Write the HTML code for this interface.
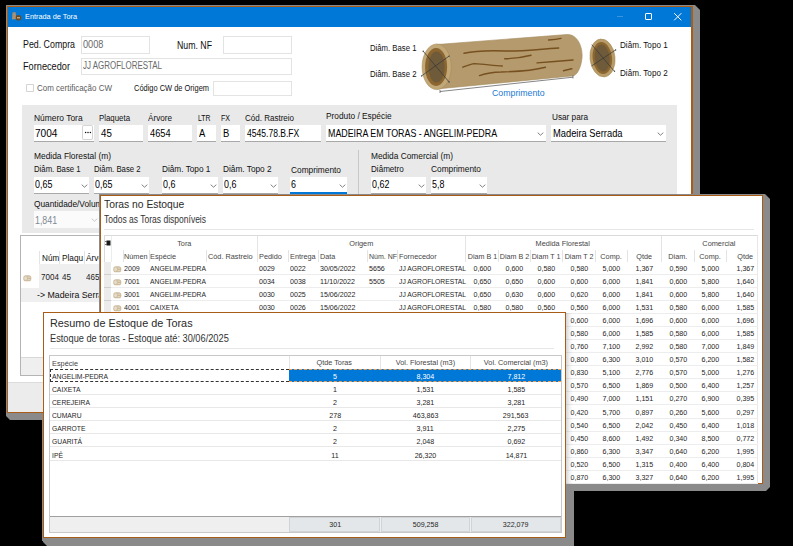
<!DOCTYPE html><html><head><meta charset="utf-8"><style>
html,body{margin:0;padding:0}
body{width:793px;height:546px;background:#000;position:relative;overflow:hidden;font-family:"Liberation Sans",sans-serif}
.a{position:absolute}
.t{position:absolute;white-space:nowrap}
</style></head><body>
<div class="a" style="left:6px;top:5px;width:694px;height:415px;background:#8a8a8a;clip-path:polygon(0 0,calc(100% - 5px) 0,100% 5px,100% calc(100% - 4px),calc(100% - 4px) 100%,4px 100%,0 calc(100% - 4px))"></div>
<div class="a" style="left:7px;top:6px;width:686px;height:407px;background:#fff;box-shadow:inset 0 0 0 1px #a95c15,inset -2px 0 0 #a95c15;"></div>
<div class="a" style="left:8px;top:7px;width:683px;height:20px;background:#0078d7;"></div>
<svg class="a" style="left:11px;top:11px" width="11" height="10" viewBox="0 0 11 10"><path d="M1.5 1.5 L4.5 1 L5.5 8 L1 8.5 Z" fill="#a89070"/><circle cx="7.5" cy="6.8" r="2.8" fill="#6b4a22"/><rect x="6" y="6.3" width="3" height="1" fill="#e0d0b0"/></svg>
<span class="t" style="left:25.00px;top:13.20px;font-size:8.00px;line-height:8.00px;color:#fff;transform:scaleX(0.916);transform-origin:left top;">Entrada de Tora</span>
<div class="a" style="left:617px;top:16px;width:6px;height:1px;background:#3d93dc;"></div>
<div class="a" style="left:645px;top:13px;width:5px;height:5px;border:1px solid #fff;border-radius:1px"></div>
<svg class="a" style="left:673px;top:12px" width="10" height="10" viewBox="0 0 10 10"><path d="M1.2 1.2 L8.3 8.3 M8.3 1.2 L1.2 8.3" stroke="#fff" stroke-width="1"/></svg>
<span class="t" style="left:23.00px;top:40.30px;font-size:10.00px;line-height:10.00px;color:#101010;transform:scaleX(0.883);transform-origin:left top;">Ped. Compra</span>
<div class="a" style="left:81px;top:36px;width:69px;height:18px;background:#fff;box-shadow:inset 0 0 0 1px #e3e3e3;"></div>
<span class="t" style="left:83.00px;top:40.00px;font-size:10.00px;line-height:10.00px;color:#6a6a6a;transform:scaleX(0.921);transform-origin:left top;">0008</span>
<span class="t" style="left:177.00px;top:40.50px;font-size:10.00px;line-height:10.00px;color:#101010;transform:scaleX(0.875);transform-origin:left top;">Num. NF</span>
<div class="a" style="left:223px;top:36px;width:69px;height:18px;background:#fff;box-shadow:inset 0 0 0 1px #e3e3e3;"></div>
<span class="t" style="left:23.00px;top:61.50px;font-size:10.00px;line-height:10.00px;color:#101010;transform:scaleX(0.919);transform-origin:left top;">Fornecedor</span>
<div class="a" style="left:81px;top:58px;width:211px;height:17px;background:#fff;box-shadow:inset 0 0 0 1px #e3e3e3;"></div>
<span class="t" style="left:83.00px;top:61.30px;font-size:10.00px;line-height:10.00px;color:#6a6a6a;transform:scaleX(0.796);transform-origin:left top;">JJ AGROFLORESTAL</span>
<div class="a" style="left:26px;top:84px;width:8px;height:8px;background:#fff;box-shadow:inset 0 0 0 1px #d4d4d4;border-radius:1px;"></div>
<span class="t" style="left:37.00px;top:84.38px;font-size:8.50px;line-height:8.50px;color:#5c5c5c;transform:scaleX(0.940);transform-origin:left top;">Com certificação CW</span>
<span class="t" style="left:134.00px;top:83.58px;font-size:8.50px;line-height:8.50px;color:#101010;transform:scaleX(0.877);transform-origin:left top;">Código CW de Origem</span>
<div class="a" style="left:213px;top:81px;width:79px;height:15px;background:#fff;box-shadow:inset 0 0 0 1px #e3e3e3;"></div>
<span class="t" style="left:370.00px;top:43.98px;font-size:8.50px;line-height:8.50px;color:#101010;transform:scaleX(0.911);transform-origin:left top;">Diâm. Base 1</span>
<span class="t" style="left:370.00px;top:69.68px;font-size:8.50px;line-height:8.50px;color:#101010;transform:scaleX(0.911);transform-origin:left top;">Diâm. Base 2</span>
<span class="t" style="left:620.00px;top:41.48px;font-size:8.50px;line-height:8.50px;color:#101010;transform:scaleX(0.955);transform-origin:left top;">Diâm. Topo 1</span>
<span class="t" style="left:620.00px;top:68.58px;font-size:8.50px;line-height:8.50px;color:#101010;transform:scaleX(0.955);transform-origin:left top;">Diâm. Topo 2</span>
<span class="t" style="left:492.00px;top:88.95px;font-size:9.00px;line-height:9.00px;color:#1a7ad4;transform:scaleX(0.974);transform-origin:left top;">Comprimento</span>
<svg class="a" style="left:0;top:0" width="793" height="120" viewBox="0 0 793 120">
<path d="M437 44.5 L567 34.5 C578 34 583 48 582 58 C581 68 577 76 572 76 L437 89 Z" fill="#b49a6c" stroke="#a58b5e" stroke-width="0.6"/>
<ellipse cx="436.7" cy="66.8" rx="14.6" ry="22.8" fill="#c2a877" stroke="#a88d5d" stroke-width="0.6"/>
<ellipse cx="436.1" cy="66.9" rx="11" ry="19" fill="#8b6630"/>
<ellipse cx="436.5" cy="67" rx="8.1" ry="15.4" fill="#6f5a3a"/>
<path d="M423.2 51.2 L449.1 82 M421.6 75.9 L449.1 56.1" stroke="#3a3a3a" stroke-width="0.75"/><circle cx="423.2" cy="51.2" r="0.7" fill="#444"/><circle cx="421.6" cy="75.9" r="0.7" fill="#444"/><circle cx="449.1" cy="82" r="0.7" fill="#444"/><circle cx="449.1" cy="56.1" r="0.7" fill="#444"/>
<path d="M464 53.3 C478 50 492 50.5 506 51 C522 51.5 540 49 558.7 48" fill="none" stroke="#775020" stroke-width="1.4" stroke-linecap="round"/>
<path d="M504.7 58.8 C515 58.5 524 57 531 55.2" fill="none" stroke="#775020" stroke-width="1.4" stroke-linecap="round"/>
<path d="M537 62.9 C550 62 562 61 573 60" fill="none" stroke="#775020" stroke-width="1.4" stroke-linecap="round"/>
<path d="M462.8 67.2 C467 65.5 471 63.8 474.7 63.6 C485 64 494 66 502.3 66" fill="none" stroke="#775020" stroke-width="1.4" stroke-linecap="round"/>
<path d="M479.5 75.6 C487 73 494 72 501 72 C520 71.5 535 70 545.5 67.2" fill="none" stroke="#775020" stroke-width="1.4" stroke-linecap="round"/>
<path d="M548.6 40 C553 39.8 558 39.2 561 38.4" fill="none" stroke="#775020" stroke-width="1.4" stroke-linecap="round"/>
<path d="M563.5 70.8 C567 70 570 69.3 571.9 68.8" fill="none" stroke="#775020" stroke-width="1.4" stroke-linecap="round"/>
<path d="M440 91.5 L573 77.2" stroke="#505050" stroke-width="0.7"/>
<path d="M440 90 L440 93 M573 75.5 L573 78.5" stroke="#505050" stroke-width="0.7"/>
<g transform="rotate(-6 602.5 58)"><ellipse cx="602.5" cy="58" rx="12.5" ry="19" fill="#b89c68" stroke="#a88d5d" stroke-width="0.6"/>
<ellipse cx="602.3" cy="58" rx="9.7" ry="16" fill="#8b6630"/>
<ellipse cx="602.3" cy="58" rx="7.4" ry="13.5" fill="#6f5a3a"/></g>
<path d="M591.8 44.6 L614 70.9 M591.8 65.8 L615.4 50.1" stroke="#3a3a3a" stroke-width="0.75"/><circle cx="614.5" cy="71.3" r="0.7" fill="#444"/><circle cx="615.6" cy="50" r="0.7" fill="#444"/>

</svg>
<div class="a" style="left:22px;top:105px;width:655px;height:128px;background:#e9e9e9;"></div>
<span class="t" style="left:33.50px;top:113.58px;font-size:8.50px;line-height:8.50px;color:#101010;transform:scaleX(0.992);transform-origin:left top;">Número Tora</span>
<span class="t" style="left:98.70px;top:113.58px;font-size:8.50px;line-height:8.50px;color:#101010;transform:scaleX(0.924);transform-origin:left top;">Plaqueta</span>
<span class="t" style="left:148.00px;top:113.58px;font-size:8.50px;line-height:8.50px;color:#101010;transform:scaleX(0.959);transform-origin:left top;">Árvore</span>
<span class="t" style="left:197.50px;top:113.58px;font-size:8.50px;line-height:8.50px;color:#101010;transform:scaleX(0.804);transform-origin:left top;">LTR</span>
<span class="t" style="left:221.20px;top:113.58px;font-size:8.50px;line-height:8.50px;color:#101010;transform:scaleX(0.829);transform-origin:left top;">FX</span>
<span class="t" style="left:245.20px;top:113.58px;font-size:8.50px;line-height:8.50px;color:#101010;transform:scaleX(0.943);transform-origin:left top;">Cód. Rastreio</span>
<span class="t" style="left:325.50px;top:111.68px;font-size:8.50px;line-height:8.50px;color:#101010;transform:scaleX(0.978);transform-origin:left top;">Produto / Espécie</span>
<span class="t" style="left:552.00px;top:113.48px;font-size:8.50px;line-height:8.50px;color:#101010;transform:scaleX(0.965);transform-origin:left top;">Usar para</span>
<div class="a" style="left:34px;top:125px;width:60px;height:17px;background:#fff;"></div>
<div class="a" style="left:34px;top:141px;width:60px;height:1px;background:#a8a8a8;"></div>
<div class="a" style="left:82px;top:125px;width:11px;height:15px;background:#fff;box-shadow:inset 0 0 0 1px #d4d4d4;border-radius:2px;"></div>
<svg class="a" style="left:82px;top:125px" width="11" height="15" viewBox="0 0 11 15"><circle cx="3.6" cy="7.4" r="0.75" fill="#111"/><circle cx="6" cy="7.4" r="0.75" fill="#111"/><circle cx="8.4" cy="7.4" r="0.75" fill="#111"/></svg>
<span class="t" style="left:35.30px;top:127.77px;font-size:10.50px;line-height:10.50px;color:#000;transform:scaleX(0.963);transform-origin:left top;">7004</span>
<div class="a" style="left:99px;top:125px;width:44px;height:17px;background:#fff;"></div>
<div class="a" style="left:99px;top:141px;width:44px;height:1px;background:#a8a8a8;"></div>
<span class="t" style="left:100.50px;top:127.77px;font-size:10.50px;line-height:10.50px;color:#000;transform:scaleX(0.925);transform-origin:left top;">45</span>
<div class="a" style="left:148px;top:125px;width:44px;height:17px;background:#fff;"></div>
<div class="a" style="left:148px;top:141px;width:44px;height:1px;background:#a8a8a8;"></div>
<span class="t" style="left:149.50px;top:127.77px;font-size:10.50px;line-height:10.50px;color:#000;transform:scaleX(0.878);transform-origin:left top;">4654</span>
<div class="a" style="left:197px;top:125px;width:19px;height:17px;background:#fff;"></div>
<div class="a" style="left:197px;top:141px;width:19px;height:1px;background:#a8a8a8;"></div>
<span class="t" style="left:199.00px;top:127.77px;font-size:10.50px;line-height:10.50px;color:#000;transform:scaleX(0.900);transform-origin:left top;">A</span>
<div class="a" style="left:221px;top:125px;width:19px;height:17px;background:#fff;"></div>
<div class="a" style="left:221px;top:141px;width:19px;height:1px;background:#a8a8a8;"></div>
<span class="t" style="left:223.00px;top:127.77px;font-size:10.50px;line-height:10.50px;color:#000;transform:scaleX(0.900);transform-origin:left top;">B</span>
<div class="a" style="left:245px;top:125px;width:76px;height:17px;background:#fff;"></div>
<div class="a" style="left:245px;top:141px;width:76px;height:1px;background:#a8a8a8;"></div>
<span class="t" style="left:247.00px;top:127.77px;font-size:10.50px;line-height:10.50px;color:#000;transform:scaleX(0.814);transform-origin:left top;">4545.78.B.FX</span>
<div class="a" style="left:326px;top:125px;width:220px;height:17px;background:#fff;"></div>
<div class="a" style="left:326px;top:141px;width:220px;height:1px;background:#a8a8a8;"></div>
<span class="t" style="left:327.50px;top:127.58px;font-size:10.50px;line-height:10.50px;color:#000;transform:scaleX(0.844);transform-origin:left top;">MADEIRA EM TORAS - ANGELIM-PEDRA</span>
<svg class="a" style="left:537.0px;top:131.5px" width="7" height="4" viewBox="0 0 7 4"><path d="M0.7 0.7 L3.5 3.2 L6.3 0.7" fill="none" stroke="#6a6a6a" stroke-width="0.85"/></svg>
<div class="a" style="left:551px;top:125px;width:115px;height:17px;background:#fff;"></div>
<div class="a" style="left:551px;top:141px;width:115px;height:1px;background:#a8a8a8;"></div>
<span class="t" style="left:552.50px;top:127.58px;font-size:10.50px;line-height:10.50px;color:#000;transform:scaleX(0.889);transform-origin:left top;">Madeira Serrada</span>
<svg class="a" style="left:657.0px;top:131.5px" width="7" height="4" viewBox="0 0 7 4"><path d="M0.7 0.7 L3.5 3.2 L6.3 0.7" fill="none" stroke="#6a6a6a" stroke-width="0.85"/></svg>
<span class="t" style="left:33.90px;top:151.68px;font-size:8.50px;line-height:8.50px;color:#101010;transform:scaleX(0.988);transform-origin:left top;">Medida Florestal (m)</span>
<span class="t" style="left:33.50px;top:164.78px;font-size:8.50px;line-height:8.50px;color:#101010;transform:scaleX(0.913);transform-origin:left top;">Diâm. Base 1</span>
<span class="t" style="left:93.90px;top:164.78px;font-size:8.50px;line-height:8.50px;color:#101010;transform:scaleX(0.913);transform-origin:left top;">Diâm. Base 2</span>
<span class="t" style="left:162.00px;top:164.78px;font-size:8.50px;line-height:8.50px;color:#101010;transform:scaleX(0.969);transform-origin:left top;">Diâm. Topo 1</span>
<span class="t" style="left:222.80px;top:164.78px;font-size:8.50px;line-height:8.50px;color:#101010;transform:scaleX(0.973);transform-origin:left top;">Diâm. Topo 2</span>
<span class="t" style="left:290.50px;top:165.58px;font-size:8.50px;line-height:8.50px;color:#101010;transform:scaleX(0.980);transform-origin:left top;">Comprimento</span>
<span class="t" style="left:371.00px;top:151.78px;font-size:8.50px;line-height:8.50px;color:#101010;transform:scaleX(0.981);transform-origin:left top;">Medida Comercial (m)</span>
<span class="t" style="left:371.00px;top:164.78px;font-size:8.50px;line-height:8.50px;color:#101010;transform:scaleX(0.951);transform-origin:left top;">Diâmetro</span>
<span class="t" style="left:431.30px;top:164.78px;font-size:8.50px;line-height:8.50px;color:#101010;transform:scaleX(0.980);transform-origin:left top;">Comprimento</span>
<div class="a" style="left:358px;top:150px;width:1px;height:46px;background:#c8c8c8;"></div>
<div class="a" style="left:34px;top:177px;width:55px;height:17px;background:#fff;"></div>
<div class="a" style="left:34px;top:193px;width:55px;height:1px;background:#a8a8a8;"></div>
<span class="t" style="left:35.20px;top:179.07px;font-size:10.50px;line-height:10.50px;color:#000;transform:scaleX(0.850);transform-origin:left top;">0,65</span>
<svg class="a" style="left:80.5px;top:183.5px" width="7" height="4" viewBox="0 0 7 4"><path d="M0.7 0.7 L3.5 3.2 L6.3 0.7" fill="none" stroke="#6a6a6a" stroke-width="0.85"/></svg>
<div class="a" style="left:94px;top:177px;width:55px;height:17px;background:#fff;"></div>
<div class="a" style="left:94px;top:193px;width:55px;height:1px;background:#a8a8a8;"></div>
<span class="t" style="left:95.20px;top:179.07px;font-size:10.50px;line-height:10.50px;color:#000;transform:scaleX(0.850);transform-origin:left top;">0,65</span>
<svg class="a" style="left:140.5px;top:183.5px" width="7" height="4" viewBox="0 0 7 4"><path d="M0.7 0.7 L3.5 3.2 L6.3 0.7" fill="none" stroke="#6a6a6a" stroke-width="0.85"/></svg>
<div class="a" style="left:162px;top:177px;width:56px;height:17px;background:#fff;"></div>
<div class="a" style="left:162px;top:193px;width:56px;height:1px;background:#a8a8a8;"></div>
<span class="t" style="left:163.20px;top:179.07px;font-size:10.50px;line-height:10.50px;color:#000;transform:scaleX(0.850);transform-origin:left top;">0,6</span>
<svg class="a" style="left:209.5px;top:183.5px" width="7" height="4" viewBox="0 0 7 4"><path d="M0.7 0.7 L3.5 3.2 L6.3 0.7" fill="none" stroke="#6a6a6a" stroke-width="0.85"/></svg>
<div class="a" style="left:223px;top:177px;width:55px;height:17px;background:#fff;"></div>
<div class="a" style="left:223px;top:193px;width:55px;height:1px;background:#a8a8a8;"></div>
<span class="t" style="left:224.20px;top:179.07px;font-size:10.50px;line-height:10.50px;color:#000;transform:scaleX(0.850);transform-origin:left top;">0,6</span>
<svg class="a" style="left:269.5px;top:183.5px" width="7" height="4" viewBox="0 0 7 4"><path d="M0.7 0.7 L3.5 3.2 L6.3 0.7" fill="none" stroke="#6a6a6a" stroke-width="0.85"/></svg>
<div class="a" style="left:290px;top:177px;width:57px;height:17px;background:#fff;"></div>
<div class="a" style="left:290px;top:192px;width:57px;height:2px;background:#0078d7;"></div>
<span class="t" style="left:291.20px;top:179.07px;font-size:10.50px;line-height:10.50px;color:#000;transform:scaleX(0.850);transform-origin:left top;">6</span>
<svg class="a" style="left:338.5px;top:183.5px" width="7" height="4" viewBox="0 0 7 4"><path d="M0.7 0.7 L3.5 3.2 L6.3 0.7" fill="none" stroke="#6a6a6a" stroke-width="0.85"/></svg>
<div class="a" style="left:371px;top:177px;width:55px;height:17px;background:#fff;"></div>
<div class="a" style="left:371px;top:193px;width:55px;height:1px;background:#a8a8a8;"></div>
<span class="t" style="left:372.20px;top:179.07px;font-size:10.50px;line-height:10.50px;color:#000;transform:scaleX(0.850);transform-origin:left top;">0,62</span>
<svg class="a" style="left:417.5px;top:183.5px" width="7" height="4" viewBox="0 0 7 4"><path d="M0.7 0.7 L3.5 3.2 L6.3 0.7" fill="none" stroke="#6a6a6a" stroke-width="0.85"/></svg>
<div class="a" style="left:431px;top:177px;width:56px;height:17px;background:#fff;"></div>
<div class="a" style="left:431px;top:193px;width:56px;height:1px;background:#a8a8a8;"></div>
<span class="t" style="left:432.20px;top:179.07px;font-size:10.50px;line-height:10.50px;color:#000;transform:scaleX(0.850);transform-origin:left top;">5,8</span>
<svg class="a" style="left:478.5px;top:183.5px" width="7" height="4" viewBox="0 0 7 4"><path d="M0.7 0.7 L3.5 3.2 L6.3 0.7" fill="none" stroke="#6a6a6a" stroke-width="0.85"/></svg>
<span class="t" style="left:33.60px;top:200.18px;font-size:8.50px;line-height:8.50px;color:#101010;transform:scaleX(0.979);transform-origin:left top;">Quantidade/Volume</span>
<div class="a" style="left:34px;top:211px;width:66px;height:17px;background:#fbfbfb;"></div>
<span class="t" style="left:35.30px;top:215.07px;font-size:10.50px;line-height:10.50px;color:#7d8894;transform:scaleX(0.840);transform-origin:left top;">1,841</span>
<svg class="a" style="left:90.5px;top:218px" width="7" height="4" viewBox="0 0 7 4"><path d="M0.7 0.7 L3.5 3.2 L6.3 0.7" fill="none" stroke="#c0c0c0" stroke-width="0.85"/></svg>
<div class="a" style="left:20px;top:235px;width:672px;height:141px;background:#fff;box-shadow:inset 0 0 0 1px #b4b4b4;"></div>
<div class="a" style="left:39px;top:251px;width:1px;height:13px;background:#e4e4e4;"></div>
<div class="a" style="left:59px;top:251px;width:1px;height:13px;background:#e4e4e4;"></div>
<div class="a" style="left:84px;top:251px;width:1px;height:13px;background:#e4e4e4;"></div>
<span class="t" style="left:41.80px;top:253.58px;font-size:8.50px;line-height:8.50px;color:#101010;transform:scaleX(0.960);transform-origin:left top;">Núm</span>
<span class="t" style="left:61.50px;top:253.58px;font-size:8.50px;line-height:8.50px;color:#101010;transform:scaleX(0.972);transform-origin:left top;">Plaqu</span>
<span class="t" style="left:86.10px;top:253.58px;font-size:8.50px;line-height:8.50px;color:#101010;transform:scaleX(0.975);transform-origin:left top;">Árvore</span>
<div class="a" style="left:39px;top:264px;width:653px;height:24px;background:#efefef;"></div>
<span class="t" style="left:41.20px;top:272.97px;font-size:8.50px;line-height:8.50px;color:#222;transform:scaleX(0.945);transform-origin:left top;">7004</span>
<span class="t" style="left:61.50px;top:272.97px;font-size:8.50px;line-height:8.50px;color:#222;transform:scaleX(0.945);transform-origin:left top;">45</span>
<span class="t" style="left:86.10px;top:272.97px;font-size:8.50px;line-height:8.50px;color:#222;transform:scaleX(0.945);transform-origin:left top;">4654</span>
<div class="a" style="left:21px;top:288px;width:671px;height:14px;background:#efefef;"></div>
<span class="t" style="left:37.00px;top:290.65px;font-size:9.00px;line-height:9.00px;color:#101010;transform:scaleX(0.977);transform-origin:left top;">-&gt; Madeira Serrada</span>
<div class="a" style="left:21px;top:358px;width:670px;height:17px;background:#efefef;"></div>
<div class="a" style="left:21px;top:357px;width:670px;height:1px;background:#d8d8d8;"></div>
<div class="a" style="left:8px;top:382px;width:683px;height:30px;background:#ececec;"></div>
<div class="a" style="left:8px;top:382px;width:683px;height:1px;background:#dcdcdc;"></div>
<svg class="a" style="left:23px;top:274px" width="9" height="8" viewBox="0 0 9 8"><rect x="0.3" y="1.3" width="8" height="6" rx="2.6" fill="#cdbb9c"/><ellipse cx="2.6" cy="4.3" rx="1.4" ry="2" fill="#e6dccb"/><rect x="4.6" y="2.6" width="2.6" height="1.1" fill="#e2d6c0"/><rect x="4.6" y="5" width="2.6" height="1.1" fill="#e2d6c0"/></svg>
<div class="a" style="left:99px;top:194px;width:671px;height:297px;background:#8a8a8a;clip-path:polygon(0 0,calc(100% - 5px) 0,100% 5px,100% calc(100% - 4px),calc(100% - 4px) 100%,4px 100%,0 calc(100% - 4px))"></div>
<div class="a" style="left:100px;top:195px;width:663px;height:289px;background:#fff;box-shadow:inset 0 0 0 1px #a95c15;"></div>
<span class="t" style="left:104.20px;top:199.27px;font-size:10.50px;line-height:10.50px;color:#2a2a2a;transform:scaleX(0.983);transform-origin:left top;">Toras no Estoque</span>
<span class="t" style="left:104.20px;top:214.90px;font-size:10.00px;line-height:10.00px;color:#333;transform:scaleX(0.851);transform-origin:left top;">Todos as Toras disponíveis</span>
<div class="a" style="left:104px;top:229px;width:650px;height:1px;background:#e6e6e6;"></div>
<div class="a" style="left:104px;top:235px;width:654px;height:248px;background:#fff;border:1px solid #dadada;border-right-color:#e8e8e8;border-bottom:none;box-sizing:border-box;"></div>
<div class="a" style="left:257px;top:236px;width:1px;height:26px;background:#e4e4e4;"></div>
<div class="a" style="left:465px;top:236px;width:1px;height:26px;background:#e4e4e4;"></div>
<div class="a" style="left:661px;top:236px;width:1px;height:26px;background:#e4e4e4;"></div>
<div class="a" style="left:123px;top:250px;width:1px;height:12px;background:#e4e4e4;"></div>
<div class="a" style="left:149px;top:250px;width:1px;height:12px;background:#e4e4e4;"></div>
<div class="a" style="left:206px;top:250px;width:1px;height:12px;background:#e4e4e4;"></div>
<div class="a" style="left:288px;top:250px;width:1px;height:12px;background:#e4e4e4;"></div>
<div class="a" style="left:318px;top:250px;width:1px;height:12px;background:#e4e4e4;"></div>
<div class="a" style="left:367px;top:250px;width:1px;height:12px;background:#e4e4e4;"></div>
<div class="a" style="left:397px;top:250px;width:1px;height:12px;background:#e4e4e4;"></div>
<div class="a" style="left:498px;top:250px;width:1px;height:12px;background:#e4e4e4;"></div>
<div class="a" style="left:530px;top:250px;width:1px;height:12px;background:#e4e4e4;"></div>
<div class="a" style="left:562px;top:250px;width:1px;height:12px;background:#e4e4e4;"></div>
<div class="a" style="left:595px;top:250px;width:1px;height:12px;background:#e4e4e4;"></div>
<div class="a" style="left:627px;top:250px;width:1px;height:12px;background:#e4e4e4;"></div>
<div class="a" style="left:694px;top:250px;width:1px;height:12px;background:#e4e4e4;"></div>
<div class="a" style="left:726px;top:250px;width:1px;height:12px;background:#e4e4e4;"></div>
<svg class="a" style="left:105px;top:240px" width="6" height="6" viewBox="0 0 6 6"><rect x="1.5" y="0.5" width="4" height="5" fill="#1a1a1a"/><rect x="0.3" y="1" width="1.2" height="1" fill="#333"/><rect x="0.3" y="4" width="1.2" height="1" fill="#333"/></svg>
<div class="a" style="left:111px;top:236px;width:1px;height:26px;background:#ececec;"></div>
<span class="t" style="left:176.70px;top:239.62px;font-size:7.50px;line-height:7.50px;color:#464646;transform:scaleX(0.968);transform-origin:center top;">Tora</span>
<span class="t" style="left:348.71px;top:239.62px;font-size:7.50px;line-height:7.50px;color:#464646;transform:scaleX(0.975);transform-origin:center top;">Origem</span>
<span class="t" style="left:535.28px;top:239.62px;font-size:7.50px;line-height:7.50px;color:#464646;transform:scaleX(0.978);transform-origin:center top;">Medida Florestal</span>
<span class="t" style="left:701.62px;top:239.62px;font-size:7.50px;line-height:7.50px;color:#464646;transform:scaleX(0.980);transform-origin:center top;">Comercial</span>
<span class="t" style="left:124.00px;top:252.62px;font-size:7.50px;line-height:7.50px;color:#464646;transform:scaleX(0.972);transform-origin:left top;">Númen</span>
<span class="t" style="left:150.00px;top:252.62px;font-size:7.50px;line-height:7.50px;color:#464646;transform:scaleX(0.977);transform-origin:left top;">Espécie</span>
<span class="t" style="left:207.50px;top:252.62px;font-size:7.50px;line-height:7.50px;color:#464646;transform:scaleX(0.974);transform-origin:left top;">Cód. Rastreio</span>
<span class="t" style="left:258.50px;top:252.62px;font-size:7.50px;line-height:7.50px;color:#464646;transform:scaleX(0.975);transform-origin:left top;">Pedido</span>
<span class="t" style="left:289.50px;top:252.62px;font-size:7.50px;line-height:7.50px;color:#464646;transform:scaleX(0.977);transform-origin:left top;">Entrega</span>
<span class="t" style="left:320.00px;top:252.62px;font-size:7.50px;line-height:7.50px;color:#464646;transform:scaleX(0.968);transform-origin:left top;">Data</span>
<span class="t" style="left:368.50px;top:252.62px;font-size:7.50px;line-height:7.50px;color:#464646;transform:scaleX(0.936);transform-origin:left top;">Núm. NF</span>
<span class="t" style="left:398.50px;top:252.62px;font-size:7.50px;line-height:7.50px;color:#464646;transform:scaleX(0.981);transform-origin:left top;">Fornecedor</span>
<span class="t" style="left:466.58px;top:252.62px;font-size:7.50px;line-height:7.50px;color:#464646;transform:scaleX(0.953);transform-origin:center top;">Diam B 1</span>
<span class="t" style="left:499.08px;top:252.62px;font-size:7.50px;line-height:7.50px;color:#464646;transform:scaleX(0.953);transform-origin:center top;">Diam B 2</span>
<span class="t" style="left:531.42px;top:252.62px;font-size:7.50px;line-height:7.50px;color:#464646;transform:scaleX(0.953);transform-origin:center top;">Diam T 1</span>
<span class="t" style="left:563.92px;top:252.62px;font-size:7.50px;line-height:7.50px;color:#464646;transform:scaleX(0.953);transform-origin:center top;">Diam T 2</span>
<span class="t" style="left:600.45px;top:252.62px;font-size:7.50px;line-height:7.50px;color:#464646;transform:scaleX(0.968);transform-origin:center top;">Comp.</span>
<span class="t" style="left:636.37px;top:252.62px;font-size:7.50px;line-height:7.50px;color:#464646;transform:scaleX(0.968);transform-origin:center top;">Qtde</span>
<span class="t" style="left:668.21px;top:252.62px;font-size:7.50px;line-height:7.50px;color:#464646;transform:scaleX(0.968);transform-origin:center top;">Diam.</span>
<span class="t" style="left:699.45px;top:252.62px;font-size:7.50px;line-height:7.50px;color:#464646;transform:scaleX(0.968);transform-origin:center top;">Comp.</span>
<span class="t" style="left:737.37px;top:252.62px;font-size:7.50px;line-height:7.50px;color:#464646;transform:scaleX(0.968);transform-origin:center top;">Qtde</span>
<div class="a" style="left:104px;top:262px;width:7px;height:13px;background:#ececec;"></div>
<div class="a" style="left:104px;top:274px;width:7px;height:1px;background:#d0d0d0;"></div>
<div class="a" style="left:111px;top:274px;width:647px;height:1px;background:#ededed;"></div>
<svg class="a" style="left:113px;top:265px" width="9" height="8" viewBox="0 0 9 8"><rect x="0.3" y="1.3" width="8" height="6" rx="2.6" fill="#cdbb9c"/><ellipse cx="2.6" cy="4.3" rx="1.4" ry="2" fill="#e6dccb"/><rect x="4.6" y="2.6" width="2.6" height="1.1" fill="#e2d6c0"/><rect x="4.6" y="5" width="2.6" height="1.1" fill="#e2d6c0"/></svg>
<span class="t" style="left:124.00px;top:265.32px;font-size:7.50px;line-height:7.50px;color:#262626;transform:scaleX(0.945);transform-origin:left top;">2009</span>
<span class="t" style="left:150.00px;top:265.32px;font-size:7.50px;line-height:7.50px;color:#262626;transform:scaleX(0.900);transform-origin:left top;">ANGELIM-PEDRA</span>
<span class="t" style="left:258.50px;top:265.32px;font-size:7.50px;line-height:7.50px;color:#262626;transform:scaleX(0.945);transform-origin:left top;">0029</span>
<span class="t" style="left:289.50px;top:265.32px;font-size:7.50px;line-height:7.50px;color:#262626;transform:scaleX(0.945);transform-origin:left top;">0022</span>
<span class="t" style="left:320.00px;top:265.32px;font-size:7.50px;line-height:7.50px;color:#262626;transform:scaleX(0.945);transform-origin:left top;">30/05/2022</span>
<span class="t" style="left:368.50px;top:265.32px;font-size:7.50px;line-height:7.50px;color:#262626;transform:scaleX(0.945);transform-origin:left top;">5656</span>
<span class="t" style="left:398.50px;top:265.32px;font-size:7.50px;line-height:7.50px;color:#262626;transform:scaleX(0.900);transform-origin:left top;">JJ AGROFLORESTAL</span>
<span class="t" style="left:472.62px;top:265.32px;font-size:7.50px;line-height:7.50px;color:#262626;transform:scaleX(0.945);transform-origin:center top;">0,600</span>
<span class="t" style="left:505.12px;top:265.32px;font-size:7.50px;line-height:7.50px;color:#262626;transform:scaleX(0.945);transform-origin:center top;">0,600</span>
<span class="t" style="left:537.12px;top:265.32px;font-size:7.50px;line-height:7.50px;color:#262626;transform:scaleX(0.945);transform-origin:center top;">0,580</span>
<span class="t" style="left:569.62px;top:265.32px;font-size:7.50px;line-height:7.50px;color:#262626;transform:scaleX(0.945);transform-origin:center top;">0,580</span>
<span class="t" style="left:602.12px;top:265.32px;font-size:7.50px;line-height:7.50px;color:#262626;transform:scaleX(0.945);transform-origin:center top;">5,000</span>
<span class="t" style="left:635.12px;top:265.32px;font-size:7.50px;line-height:7.50px;color:#262626;transform:scaleX(0.945);transform-origin:center top;">1,367</span>
<span class="t" style="left:668.62px;top:265.32px;font-size:7.50px;line-height:7.50px;color:#262626;transform:scaleX(0.945);transform-origin:center top;">0,590</span>
<span class="t" style="left:701.12px;top:265.32px;font-size:7.50px;line-height:7.50px;color:#262626;transform:scaleX(0.945);transform-origin:center top;">5,000</span>
<span class="t" style="left:736.12px;top:265.32px;font-size:7.50px;line-height:7.50px;color:#262626;transform:scaleX(0.945);transform-origin:center top;">1,367</span>
<div class="a" style="left:104px;top:275px;width:7px;height:13px;background:#ececec;"></div>
<div class="a" style="left:104px;top:287px;width:7px;height:1px;background:#d0d0d0;"></div>
<div class="a" style="left:111px;top:287px;width:647px;height:1px;background:#ededed;"></div>
<svg class="a" style="left:113px;top:278px" width="9" height="8" viewBox="0 0 9 8"><rect x="0.3" y="1.3" width="8" height="6" rx="2.6" fill="#cdbb9c"/><ellipse cx="2.6" cy="4.3" rx="1.4" ry="2" fill="#e6dccb"/><rect x="4.6" y="2.6" width="2.6" height="1.1" fill="#e2d6c0"/><rect x="4.6" y="5" width="2.6" height="1.1" fill="#e2d6c0"/></svg>
<span class="t" style="left:124.00px;top:278.32px;font-size:7.50px;line-height:7.50px;color:#262626;transform:scaleX(0.945);transform-origin:left top;">7001</span>
<span class="t" style="left:150.00px;top:278.32px;font-size:7.50px;line-height:7.50px;color:#262626;transform:scaleX(0.900);transform-origin:left top;">ANGELIM-PEDRA</span>
<span class="t" style="left:258.50px;top:278.32px;font-size:7.50px;line-height:7.50px;color:#262626;transform:scaleX(0.945);transform-origin:left top;">0034</span>
<span class="t" style="left:289.50px;top:278.32px;font-size:7.50px;line-height:7.50px;color:#262626;transform:scaleX(0.945);transform-origin:left top;">0038</span>
<span class="t" style="left:320.00px;top:278.32px;font-size:7.50px;line-height:7.50px;color:#262626;transform:scaleX(0.945);transform-origin:left top;">11/10/2022</span>
<span class="t" style="left:368.50px;top:278.32px;font-size:7.50px;line-height:7.50px;color:#262626;transform:scaleX(0.945);transform-origin:left top;">5505</span>
<span class="t" style="left:398.50px;top:278.32px;font-size:7.50px;line-height:7.50px;color:#262626;transform:scaleX(0.900);transform-origin:left top;">JJ AGROFLORESTAL</span>
<span class="t" style="left:472.62px;top:278.32px;font-size:7.50px;line-height:7.50px;color:#262626;transform:scaleX(0.945);transform-origin:center top;">0,650</span>
<span class="t" style="left:505.12px;top:278.32px;font-size:7.50px;line-height:7.50px;color:#262626;transform:scaleX(0.945);transform-origin:center top;">0,650</span>
<span class="t" style="left:537.12px;top:278.32px;font-size:7.50px;line-height:7.50px;color:#262626;transform:scaleX(0.945);transform-origin:center top;">0,600</span>
<span class="t" style="left:569.62px;top:278.32px;font-size:7.50px;line-height:7.50px;color:#262626;transform:scaleX(0.945);transform-origin:center top;">0,600</span>
<span class="t" style="left:602.12px;top:278.32px;font-size:7.50px;line-height:7.50px;color:#262626;transform:scaleX(0.945);transform-origin:center top;">6,000</span>
<span class="t" style="left:635.12px;top:278.32px;font-size:7.50px;line-height:7.50px;color:#262626;transform:scaleX(0.945);transform-origin:center top;">1,841</span>
<span class="t" style="left:668.62px;top:278.32px;font-size:7.50px;line-height:7.50px;color:#262626;transform:scaleX(0.945);transform-origin:center top;">0,600</span>
<span class="t" style="left:701.12px;top:278.32px;font-size:7.50px;line-height:7.50px;color:#262626;transform:scaleX(0.945);transform-origin:center top;">5,800</span>
<span class="t" style="left:736.12px;top:278.32px;font-size:7.50px;line-height:7.50px;color:#262626;transform:scaleX(0.945);transform-origin:center top;">1,640</span>
<div class="a" style="left:104px;top:288px;width:7px;height:13px;background:#ececec;"></div>
<div class="a" style="left:104px;top:300px;width:7px;height:1px;background:#d0d0d0;"></div>
<div class="a" style="left:111px;top:300px;width:647px;height:1px;background:#ededed;"></div>
<svg class="a" style="left:113px;top:291px" width="9" height="8" viewBox="0 0 9 8"><rect x="0.3" y="1.3" width="8" height="6" rx="2.6" fill="#cdbb9c"/><ellipse cx="2.6" cy="4.3" rx="1.4" ry="2" fill="#e6dccb"/><rect x="4.6" y="2.6" width="2.6" height="1.1" fill="#e2d6c0"/><rect x="4.6" y="5" width="2.6" height="1.1" fill="#e2d6c0"/></svg>
<span class="t" style="left:124.00px;top:291.32px;font-size:7.50px;line-height:7.50px;color:#262626;transform:scaleX(0.945);transform-origin:left top;">3001</span>
<span class="t" style="left:150.00px;top:291.32px;font-size:7.50px;line-height:7.50px;color:#262626;transform:scaleX(0.900);transform-origin:left top;">ANGELIM-PEDRA</span>
<span class="t" style="left:258.50px;top:291.32px;font-size:7.50px;line-height:7.50px;color:#262626;transform:scaleX(0.945);transform-origin:left top;">0030</span>
<span class="t" style="left:289.50px;top:291.32px;font-size:7.50px;line-height:7.50px;color:#262626;transform:scaleX(0.945);transform-origin:left top;">0025</span>
<span class="t" style="left:320.00px;top:291.32px;font-size:7.50px;line-height:7.50px;color:#262626;transform:scaleX(0.945);transform-origin:left top;">15/06/2022</span>
<span class="t" style="left:398.50px;top:291.32px;font-size:7.50px;line-height:7.50px;color:#262626;transform:scaleX(0.900);transform-origin:left top;">JJ AGROFLORESTAL</span>
<span class="t" style="left:472.62px;top:291.32px;font-size:7.50px;line-height:7.50px;color:#262626;transform:scaleX(0.945);transform-origin:center top;">0,650</span>
<span class="t" style="left:505.12px;top:291.32px;font-size:7.50px;line-height:7.50px;color:#262626;transform:scaleX(0.945);transform-origin:center top;">0,630</span>
<span class="t" style="left:537.12px;top:291.32px;font-size:7.50px;line-height:7.50px;color:#262626;transform:scaleX(0.945);transform-origin:center top;">0,600</span>
<span class="t" style="left:569.62px;top:291.32px;font-size:7.50px;line-height:7.50px;color:#262626;transform:scaleX(0.945);transform-origin:center top;">0,620</span>
<span class="t" style="left:602.12px;top:291.32px;font-size:7.50px;line-height:7.50px;color:#262626;transform:scaleX(0.945);transform-origin:center top;">6,000</span>
<span class="t" style="left:635.12px;top:291.32px;font-size:7.50px;line-height:7.50px;color:#262626;transform:scaleX(0.945);transform-origin:center top;">1,841</span>
<span class="t" style="left:668.62px;top:291.32px;font-size:7.50px;line-height:7.50px;color:#262626;transform:scaleX(0.945);transform-origin:center top;">0,600</span>
<span class="t" style="left:701.12px;top:291.32px;font-size:7.50px;line-height:7.50px;color:#262626;transform:scaleX(0.945);transform-origin:center top;">5,800</span>
<span class="t" style="left:736.12px;top:291.32px;font-size:7.50px;line-height:7.50px;color:#262626;transform:scaleX(0.945);transform-origin:center top;">1,640</span>
<div class="a" style="left:104px;top:301px;width:7px;height:13px;background:#ececec;"></div>
<div class="a" style="left:104px;top:313px;width:7px;height:1px;background:#d0d0d0;"></div>
<div class="a" style="left:111px;top:313px;width:647px;height:1px;background:#ededed;"></div>
<svg class="a" style="left:113px;top:304px" width="9" height="8" viewBox="0 0 9 8"><rect x="0.3" y="1.3" width="8" height="6" rx="2.6" fill="#cdbb9c"/><ellipse cx="2.6" cy="4.3" rx="1.4" ry="2" fill="#e6dccb"/><rect x="4.6" y="2.6" width="2.6" height="1.1" fill="#e2d6c0"/><rect x="4.6" y="5" width="2.6" height="1.1" fill="#e2d6c0"/></svg>
<span class="t" style="left:124.00px;top:304.32px;font-size:7.50px;line-height:7.50px;color:#262626;transform:scaleX(0.945);transform-origin:left top;">4001</span>
<span class="t" style="left:150.00px;top:304.32px;font-size:7.50px;line-height:7.50px;color:#262626;transform:scaleX(0.900);transform-origin:left top;">CAIXETA</span>
<span class="t" style="left:258.50px;top:304.32px;font-size:7.50px;line-height:7.50px;color:#262626;transform:scaleX(0.945);transform-origin:left top;">0030</span>
<span class="t" style="left:289.50px;top:304.32px;font-size:7.50px;line-height:7.50px;color:#262626;transform:scaleX(0.945);transform-origin:left top;">0026</span>
<span class="t" style="left:320.00px;top:304.32px;font-size:7.50px;line-height:7.50px;color:#262626;transform:scaleX(0.945);transform-origin:left top;">15/06/2022</span>
<span class="t" style="left:398.50px;top:304.32px;font-size:7.50px;line-height:7.50px;color:#262626;transform:scaleX(0.900);transform-origin:left top;">JJ AGROFLORESTAL</span>
<span class="t" style="left:472.62px;top:304.32px;font-size:7.50px;line-height:7.50px;color:#262626;transform:scaleX(0.945);transform-origin:center top;">0,580</span>
<span class="t" style="left:505.12px;top:304.32px;font-size:7.50px;line-height:7.50px;color:#262626;transform:scaleX(0.945);transform-origin:center top;">0,580</span>
<span class="t" style="left:537.12px;top:304.32px;font-size:7.50px;line-height:7.50px;color:#262626;transform:scaleX(0.945);transform-origin:center top;">0,560</span>
<span class="t" style="left:569.62px;top:304.32px;font-size:7.50px;line-height:7.50px;color:#262626;transform:scaleX(0.945);transform-origin:center top;">0,560</span>
<span class="t" style="left:602.12px;top:304.32px;font-size:7.50px;line-height:7.50px;color:#262626;transform:scaleX(0.945);transform-origin:center top;">6,000</span>
<span class="t" style="left:635.12px;top:304.32px;font-size:7.50px;line-height:7.50px;color:#262626;transform:scaleX(0.945);transform-origin:center top;">1,531</span>
<span class="t" style="left:668.62px;top:304.32px;font-size:7.50px;line-height:7.50px;color:#262626;transform:scaleX(0.945);transform-origin:center top;">0,580</span>
<span class="t" style="left:701.12px;top:304.32px;font-size:7.50px;line-height:7.50px;color:#262626;transform:scaleX(0.945);transform-origin:center top;">6,000</span>
<span class="t" style="left:736.12px;top:304.32px;font-size:7.50px;line-height:7.50px;color:#262626;transform:scaleX(0.945);transform-origin:center top;">1,585</span>
<div class="a" style="left:104px;top:314px;width:7px;height:13px;background:#ececec;"></div>
<div class="a" style="left:104px;top:326px;width:7px;height:1px;background:#d0d0d0;"></div>
<div class="a" style="left:111px;top:326px;width:647px;height:1px;background:#ededed;"></div>
<span class="t" style="left:569.62px;top:317.32px;font-size:7.50px;line-height:7.50px;color:#262626;transform:scaleX(0.945);transform-origin:center top;">0,600</span>
<span class="t" style="left:602.12px;top:317.32px;font-size:7.50px;line-height:7.50px;color:#262626;transform:scaleX(0.945);transform-origin:center top;">6,000</span>
<span class="t" style="left:635.12px;top:317.32px;font-size:7.50px;line-height:7.50px;color:#262626;transform:scaleX(0.945);transform-origin:center top;">1,696</span>
<span class="t" style="left:668.62px;top:317.32px;font-size:7.50px;line-height:7.50px;color:#262626;transform:scaleX(0.945);transform-origin:center top;">0,600</span>
<span class="t" style="left:701.12px;top:317.32px;font-size:7.50px;line-height:7.50px;color:#262626;transform:scaleX(0.945);transform-origin:center top;">6,000</span>
<span class="t" style="left:736.12px;top:317.32px;font-size:7.50px;line-height:7.50px;color:#262626;transform:scaleX(0.945);transform-origin:center top;">1,696</span>
<div class="a" style="left:104px;top:327px;width:7px;height:13px;background:#ececec;"></div>
<div class="a" style="left:104px;top:339px;width:7px;height:1px;background:#d0d0d0;"></div>
<div class="a" style="left:111px;top:339px;width:647px;height:1px;background:#ededed;"></div>
<span class="t" style="left:569.62px;top:330.32px;font-size:7.50px;line-height:7.50px;color:#262626;transform:scaleX(0.945);transform-origin:center top;">0,580</span>
<span class="t" style="left:602.12px;top:330.32px;font-size:7.50px;line-height:7.50px;color:#262626;transform:scaleX(0.945);transform-origin:center top;">6,000</span>
<span class="t" style="left:635.12px;top:330.32px;font-size:7.50px;line-height:7.50px;color:#262626;transform:scaleX(0.945);transform-origin:center top;">1,585</span>
<span class="t" style="left:668.62px;top:330.32px;font-size:7.50px;line-height:7.50px;color:#262626;transform:scaleX(0.945);transform-origin:center top;">0,580</span>
<span class="t" style="left:701.12px;top:330.32px;font-size:7.50px;line-height:7.50px;color:#262626;transform:scaleX(0.945);transform-origin:center top;">6,000</span>
<span class="t" style="left:736.12px;top:330.32px;font-size:7.50px;line-height:7.50px;color:#262626;transform:scaleX(0.945);transform-origin:center top;">1,585</span>
<div class="a" style="left:104px;top:340px;width:7px;height:13px;background:#ececec;"></div>
<div class="a" style="left:104px;top:352px;width:7px;height:1px;background:#d0d0d0;"></div>
<div class="a" style="left:111px;top:352px;width:647px;height:1px;background:#ededed;"></div>
<span class="t" style="left:569.62px;top:343.32px;font-size:7.50px;line-height:7.50px;color:#262626;transform:scaleX(0.945);transform-origin:center top;">0,760</span>
<span class="t" style="left:602.12px;top:343.32px;font-size:7.50px;line-height:7.50px;color:#262626;transform:scaleX(0.945);transform-origin:center top;">7,100</span>
<span class="t" style="left:635.12px;top:343.32px;font-size:7.50px;line-height:7.50px;color:#262626;transform:scaleX(0.945);transform-origin:center top;">2,992</span>
<span class="t" style="left:668.62px;top:343.32px;font-size:7.50px;line-height:7.50px;color:#262626;transform:scaleX(0.945);transform-origin:center top;">0,580</span>
<span class="t" style="left:701.12px;top:343.32px;font-size:7.50px;line-height:7.50px;color:#262626;transform:scaleX(0.945);transform-origin:center top;">7,000</span>
<span class="t" style="left:736.12px;top:343.32px;font-size:7.50px;line-height:7.50px;color:#262626;transform:scaleX(0.945);transform-origin:center top;">1,849</span>
<div class="a" style="left:104px;top:353px;width:7px;height:13px;background:#ececec;"></div>
<div class="a" style="left:104px;top:365px;width:7px;height:1px;background:#d0d0d0;"></div>
<div class="a" style="left:111px;top:365px;width:647px;height:1px;background:#ededed;"></div>
<span class="t" style="left:569.62px;top:356.32px;font-size:7.50px;line-height:7.50px;color:#262626;transform:scaleX(0.945);transform-origin:center top;">0,800</span>
<span class="t" style="left:602.12px;top:356.32px;font-size:7.50px;line-height:7.50px;color:#262626;transform:scaleX(0.945);transform-origin:center top;">6,300</span>
<span class="t" style="left:635.12px;top:356.32px;font-size:7.50px;line-height:7.50px;color:#262626;transform:scaleX(0.945);transform-origin:center top;">3,010</span>
<span class="t" style="left:668.62px;top:356.32px;font-size:7.50px;line-height:7.50px;color:#262626;transform:scaleX(0.945);transform-origin:center top;">0,570</span>
<span class="t" style="left:701.12px;top:356.32px;font-size:7.50px;line-height:7.50px;color:#262626;transform:scaleX(0.945);transform-origin:center top;">6,200</span>
<span class="t" style="left:736.12px;top:356.32px;font-size:7.50px;line-height:7.50px;color:#262626;transform:scaleX(0.945);transform-origin:center top;">1,582</span>
<div class="a" style="left:104px;top:366px;width:7px;height:13px;background:#ececec;"></div>
<div class="a" style="left:104px;top:378px;width:7px;height:1px;background:#d0d0d0;"></div>
<div class="a" style="left:111px;top:378px;width:647px;height:1px;background:#ededed;"></div>
<span class="t" style="left:569.62px;top:369.32px;font-size:7.50px;line-height:7.50px;color:#262626;transform:scaleX(0.945);transform-origin:center top;">0,830</span>
<span class="t" style="left:602.12px;top:369.32px;font-size:7.50px;line-height:7.50px;color:#262626;transform:scaleX(0.945);transform-origin:center top;">5,100</span>
<span class="t" style="left:635.12px;top:369.32px;font-size:7.50px;line-height:7.50px;color:#262626;transform:scaleX(0.945);transform-origin:center top;">2,776</span>
<span class="t" style="left:668.62px;top:369.32px;font-size:7.50px;line-height:7.50px;color:#262626;transform:scaleX(0.945);transform-origin:center top;">0,570</span>
<span class="t" style="left:701.12px;top:369.32px;font-size:7.50px;line-height:7.50px;color:#262626;transform:scaleX(0.945);transform-origin:center top;">5,000</span>
<span class="t" style="left:736.12px;top:369.32px;font-size:7.50px;line-height:7.50px;color:#262626;transform:scaleX(0.945);transform-origin:center top;">1,276</span>
<div class="a" style="left:104px;top:379px;width:7px;height:13px;background:#ececec;"></div>
<div class="a" style="left:104px;top:391px;width:7px;height:1px;background:#d0d0d0;"></div>
<div class="a" style="left:111px;top:391px;width:647px;height:1px;background:#ededed;"></div>
<span class="t" style="left:569.62px;top:382.32px;font-size:7.50px;line-height:7.50px;color:#262626;transform:scaleX(0.945);transform-origin:center top;">0,570</span>
<span class="t" style="left:602.12px;top:382.32px;font-size:7.50px;line-height:7.50px;color:#262626;transform:scaleX(0.945);transform-origin:center top;">6,500</span>
<span class="t" style="left:635.12px;top:382.32px;font-size:7.50px;line-height:7.50px;color:#262626;transform:scaleX(0.945);transform-origin:center top;">1,869</span>
<span class="t" style="left:668.62px;top:382.32px;font-size:7.50px;line-height:7.50px;color:#262626;transform:scaleX(0.945);transform-origin:center top;">0,500</span>
<span class="t" style="left:701.12px;top:382.32px;font-size:7.50px;line-height:7.50px;color:#262626;transform:scaleX(0.945);transform-origin:center top;">6,400</span>
<span class="t" style="left:736.12px;top:382.32px;font-size:7.50px;line-height:7.50px;color:#262626;transform:scaleX(0.945);transform-origin:center top;">1,257</span>
<div class="a" style="left:104px;top:392px;width:7px;height:13px;background:#ececec;"></div>
<div class="a" style="left:104px;top:404px;width:7px;height:1px;background:#d0d0d0;"></div>
<div class="a" style="left:111px;top:404px;width:647px;height:1px;background:#ededed;"></div>
<span class="t" style="left:569.62px;top:395.32px;font-size:7.50px;line-height:7.50px;color:#262626;transform:scaleX(0.945);transform-origin:center top;">0,490</span>
<span class="t" style="left:602.12px;top:395.32px;font-size:7.50px;line-height:7.50px;color:#262626;transform:scaleX(0.945);transform-origin:center top;">7,000</span>
<span class="t" style="left:635.12px;top:395.32px;font-size:7.50px;line-height:7.50px;color:#262626;transform:scaleX(0.945);transform-origin:center top;">1,151</span>
<span class="t" style="left:668.62px;top:395.32px;font-size:7.50px;line-height:7.50px;color:#262626;transform:scaleX(0.945);transform-origin:center top;">0,270</span>
<span class="t" style="left:701.12px;top:395.32px;font-size:7.50px;line-height:7.50px;color:#262626;transform:scaleX(0.945);transform-origin:center top;">6,900</span>
<span class="t" style="left:736.12px;top:395.32px;font-size:7.50px;line-height:7.50px;color:#262626;transform:scaleX(0.945);transform-origin:center top;">0,395</span>
<div class="a" style="left:104px;top:406px;width:7px;height:13px;background:#ececec;"></div>
<div class="a" style="left:104px;top:418px;width:7px;height:1px;background:#d0d0d0;"></div>
<div class="a" style="left:111px;top:418px;width:647px;height:1px;background:#ededed;"></div>
<span class="t" style="left:569.62px;top:409.32px;font-size:7.50px;line-height:7.50px;color:#262626;transform:scaleX(0.945);transform-origin:center top;">0,420</span>
<span class="t" style="left:602.12px;top:409.32px;font-size:7.50px;line-height:7.50px;color:#262626;transform:scaleX(0.945);transform-origin:center top;">5,700</span>
<span class="t" style="left:635.12px;top:409.32px;font-size:7.50px;line-height:7.50px;color:#262626;transform:scaleX(0.945);transform-origin:center top;">0,897</span>
<span class="t" style="left:668.62px;top:409.32px;font-size:7.50px;line-height:7.50px;color:#262626;transform:scaleX(0.945);transform-origin:center top;">0,260</span>
<span class="t" style="left:701.12px;top:409.32px;font-size:7.50px;line-height:7.50px;color:#262626;transform:scaleX(0.945);transform-origin:center top;">5,600</span>
<span class="t" style="left:736.12px;top:409.32px;font-size:7.50px;line-height:7.50px;color:#262626;transform:scaleX(0.945);transform-origin:center top;">0,297</span>
<div class="a" style="left:104px;top:419px;width:7px;height:13px;background:#ececec;"></div>
<div class="a" style="left:104px;top:431px;width:7px;height:1px;background:#d0d0d0;"></div>
<div class="a" style="left:111px;top:431px;width:647px;height:1px;background:#ededed;"></div>
<span class="t" style="left:569.62px;top:422.32px;font-size:7.50px;line-height:7.50px;color:#262626;transform:scaleX(0.945);transform-origin:center top;">0,540</span>
<span class="t" style="left:602.12px;top:422.32px;font-size:7.50px;line-height:7.50px;color:#262626;transform:scaleX(0.945);transform-origin:center top;">6,500</span>
<span class="t" style="left:635.12px;top:422.32px;font-size:7.50px;line-height:7.50px;color:#262626;transform:scaleX(0.945);transform-origin:center top;">2,042</span>
<span class="t" style="left:668.62px;top:422.32px;font-size:7.50px;line-height:7.50px;color:#262626;transform:scaleX(0.945);transform-origin:center top;">0,450</span>
<span class="t" style="left:701.12px;top:422.32px;font-size:7.50px;line-height:7.50px;color:#262626;transform:scaleX(0.945);transform-origin:center top;">6,400</span>
<span class="t" style="left:736.12px;top:422.32px;font-size:7.50px;line-height:7.50px;color:#262626;transform:scaleX(0.945);transform-origin:center top;">1,018</span>
<div class="a" style="left:104px;top:432px;width:7px;height:13px;background:#ececec;"></div>
<div class="a" style="left:104px;top:444px;width:7px;height:1px;background:#d0d0d0;"></div>
<div class="a" style="left:111px;top:444px;width:647px;height:1px;background:#ededed;"></div>
<span class="t" style="left:569.62px;top:435.32px;font-size:7.50px;line-height:7.50px;color:#262626;transform:scaleX(0.945);transform-origin:center top;">0,450</span>
<span class="t" style="left:602.12px;top:435.32px;font-size:7.50px;line-height:7.50px;color:#262626;transform:scaleX(0.945);transform-origin:center top;">8,600</span>
<span class="t" style="left:635.12px;top:435.32px;font-size:7.50px;line-height:7.50px;color:#262626;transform:scaleX(0.945);transform-origin:center top;">1,492</span>
<span class="t" style="left:668.62px;top:435.32px;font-size:7.50px;line-height:7.50px;color:#262626;transform:scaleX(0.945);transform-origin:center top;">0,340</span>
<span class="t" style="left:701.12px;top:435.32px;font-size:7.50px;line-height:7.50px;color:#262626;transform:scaleX(0.945);transform-origin:center top;">8,500</span>
<span class="t" style="left:736.12px;top:435.32px;font-size:7.50px;line-height:7.50px;color:#262626;transform:scaleX(0.945);transform-origin:center top;">0,772</span>
<div class="a" style="left:104px;top:445px;width:7px;height:13px;background:#ececec;"></div>
<div class="a" style="left:104px;top:457px;width:7px;height:1px;background:#d0d0d0;"></div>
<div class="a" style="left:111px;top:457px;width:647px;height:1px;background:#ededed;"></div>
<span class="t" style="left:569.62px;top:448.32px;font-size:7.50px;line-height:7.50px;color:#262626;transform:scaleX(0.945);transform-origin:center top;">0,860</span>
<span class="t" style="left:602.12px;top:448.32px;font-size:7.50px;line-height:7.50px;color:#262626;transform:scaleX(0.945);transform-origin:center top;">6,300</span>
<span class="t" style="left:635.12px;top:448.32px;font-size:7.50px;line-height:7.50px;color:#262626;transform:scaleX(0.945);transform-origin:center top;">3,347</span>
<span class="t" style="left:668.62px;top:448.32px;font-size:7.50px;line-height:7.50px;color:#262626;transform:scaleX(0.945);transform-origin:center top;">0,640</span>
<span class="t" style="left:701.12px;top:448.32px;font-size:7.50px;line-height:7.50px;color:#262626;transform:scaleX(0.945);transform-origin:center top;">6,200</span>
<span class="t" style="left:736.12px;top:448.32px;font-size:7.50px;line-height:7.50px;color:#262626;transform:scaleX(0.945);transform-origin:center top;">1,995</span>
<div class="a" style="left:104px;top:458px;width:7px;height:13px;background:#ececec;"></div>
<div class="a" style="left:104px;top:470px;width:7px;height:1px;background:#d0d0d0;"></div>
<div class="a" style="left:111px;top:470px;width:647px;height:1px;background:#ededed;"></div>
<span class="t" style="left:569.62px;top:461.32px;font-size:7.50px;line-height:7.50px;color:#262626;transform:scaleX(0.945);transform-origin:center top;">0,520</span>
<span class="t" style="left:602.12px;top:461.32px;font-size:7.50px;line-height:7.50px;color:#262626;transform:scaleX(0.945);transform-origin:center top;">6,500</span>
<span class="t" style="left:635.12px;top:461.32px;font-size:7.50px;line-height:7.50px;color:#262626;transform:scaleX(0.945);transform-origin:center top;">1,315</span>
<span class="t" style="left:668.62px;top:461.32px;font-size:7.50px;line-height:7.50px;color:#262626;transform:scaleX(0.945);transform-origin:center top;">0,400</span>
<span class="t" style="left:701.12px;top:461.32px;font-size:7.50px;line-height:7.50px;color:#262626;transform:scaleX(0.945);transform-origin:center top;">6,400</span>
<span class="t" style="left:736.12px;top:461.32px;font-size:7.50px;line-height:7.50px;color:#262626;transform:scaleX(0.945);transform-origin:center top;">0,804</span>
<div class="a" style="left:104px;top:471px;width:7px;height:13px;background:#ececec;"></div>
<div class="a" style="left:104px;top:483px;width:7px;height:1px;background:#d0d0d0;"></div>
<div class="a" style="left:111px;top:483px;width:647px;height:1px;background:#ededed;"></div>
<span class="t" style="left:569.62px;top:474.32px;font-size:7.50px;line-height:7.50px;color:#262626;transform:scaleX(0.945);transform-origin:center top;">0,870</span>
<span class="t" style="left:602.12px;top:474.32px;font-size:7.50px;line-height:7.50px;color:#262626;transform:scaleX(0.945);transform-origin:center top;">6,300</span>
<span class="t" style="left:635.12px;top:474.32px;font-size:7.50px;line-height:7.50px;color:#262626;transform:scaleX(0.945);transform-origin:center top;">3,327</span>
<span class="t" style="left:668.62px;top:474.32px;font-size:7.50px;line-height:7.50px;color:#262626;transform:scaleX(0.945);transform-origin:center top;">0,640</span>
<span class="t" style="left:701.12px;top:474.32px;font-size:7.50px;line-height:7.50px;color:#262626;transform:scaleX(0.945);transform-origin:center top;">6,200</span>
<span class="t" style="left:736.12px;top:474.32px;font-size:7.50px;line-height:7.50px;color:#262626;transform:scaleX(0.945);transform-origin:center top;">1,995</span>
<div class="a" style="left:43px;top:538px;width:531px;height:8px;background:#8a8a8a;clip-path:polygon(0 0,100% 0,100% 40%,calc(100% - 4px) 100%,4px 100%,0 calc(100% - 4px));"></div>
<div class="a" style="left:566px;top:484px;width:8px;height:62px;background:#8a8a8a;"></div>
<div class="a" style="left:42px;top:420px;width:1px;height:121px;background:#8a8a8a;"></div>
<div class="a" style="left:566px;top:313px;width:7px;height:171px;background:linear-gradient(90deg,rgba(0,0,0,0.16),rgba(0,0,0,0.05) 50%,rgba(0,0,0,0))"></div>
<div class="a" style="left:43px;top:312px;width:523px;height:226px;background:#fff;box-shadow:inset 0 0 0 1px #a95c15;"></div>
<span class="t" style="left:50.20px;top:317.55px;font-size:11.00px;line-height:11.00px;color:#2a2a2a;transform:scaleX(0.985);transform-origin:left top;">Resumo de Estoque de Toras</span>
<span class="t" style="left:50.00px;top:334.30px;font-size:10.00px;line-height:10.00px;color:#333;transform:scaleX(0.924);transform-origin:left top;">Estoque de toras - Estoque até: 30/06/2025</span>
<div class="a" style="left:50px;top:348px;width:504px;height:1px;background:#e6e6e6;"></div>
<div class="a" style="left:49px;top:355px;width:513px;height:178px;background:#fff;box-shadow:inset 0 0 0 1px #c8c8c8;"></div>
<div class="a" style="left:289px;top:356px;width:1px;height:13px;background:#e4e4e4;"></div>
<div class="a" style="left:380px;top:356px;width:1px;height:13px;background:#e4e4e4;"></div>
<div class="a" style="left:470px;top:356px;width:1px;height:13px;background:#e4e4e4;"></div>
<span class="t" style="left:52.00px;top:359.52px;font-size:7.50px;line-height:7.50px;color:#464646;transform:scaleX(0.977);transform-origin:left top;">Espécie</span>
<span class="t" style="left:316.23px;top:359.32px;font-size:7.50px;line-height:7.50px;color:#464646;transform:scaleX(0.970);transform-origin:center top;">Qtde Toras</span>
<span class="t" style="left:394.57px;top:359.32px;font-size:7.50px;line-height:7.50px;color:#464646;transform:scaleX(0.974);transform-origin:center top;">Vol. Florestal (m3)</span>
<span class="t" style="left:482.57px;top:359.32px;font-size:7.50px;line-height:7.50px;color:#464646;transform:scaleX(0.974);transform-origin:center top;">Vol. Comercial (m3)</span>
<div class="a" style="left:289px;top:369px;width:272px;height:13px;background:#0078d7;"></div>
<div class="a" style="left:289px;top:369px;width:272px;height:13px;border-top:1px dashed #f0a050;border-bottom:1px dashed #f0a050;box-sizing:border-box"></div>
<div class="a" style="left:50px;top:369px;width:239px;height:13px;border:1px dashed #333;border-right:none;box-sizing:border-box"></div>
<span class="t" style="left:52.00px;top:373.02px;font-size:7.50px;line-height:7.50px;color:#262626;transform:scaleX(0.900);transform-origin:left top;">ANGELIM-PEDRA</span>
<span class="t" style="left:332.91px;top:373.02px;font-size:7.50px;line-height:7.50px;color:#fff;transform:scaleX(0.945);transform-origin:center top;">5</span>
<span class="t" style="left:416.12px;top:373.02px;font-size:7.50px;line-height:7.50px;color:#fff;transform:scaleX(0.945);transform-origin:center top;">8,304</span>
<span class="t" style="left:506.62px;top:373.02px;font-size:7.50px;line-height:7.50px;color:#fff;transform:scaleX(0.945);transform-origin:center top;">7,812</span>
<div class="a" style="left:50px;top:394px;width:511px;height:1px;background:#e8e8e8;"></div>
<span class="t" style="left:52.00px;top:386.02px;font-size:7.50px;line-height:7.50px;color:#262626;transform:scaleX(0.900);transform-origin:left top;">CAIXETA</span>
<span class="t" style="left:332.91px;top:386.02px;font-size:7.50px;line-height:7.50px;color:#262626;transform:scaleX(0.945);transform-origin:center top;">1</span>
<span class="t" style="left:416.12px;top:386.02px;font-size:7.50px;line-height:7.50px;color:#262626;transform:scaleX(0.945);transform-origin:center top;">1,531</span>
<span class="t" style="left:506.62px;top:386.02px;font-size:7.50px;line-height:7.50px;color:#262626;transform:scaleX(0.945);transform-origin:center top;">1,585</span>
<div class="a" style="left:50px;top:407px;width:511px;height:1px;background:#e8e8e8;"></div>
<span class="t" style="left:52.00px;top:399.02px;font-size:7.50px;line-height:7.50px;color:#262626;transform:scaleX(0.900);transform-origin:left top;">CEREJEIRA</span>
<span class="t" style="left:332.91px;top:399.02px;font-size:7.50px;line-height:7.50px;color:#262626;transform:scaleX(0.945);transform-origin:center top;">2</span>
<span class="t" style="left:416.12px;top:399.02px;font-size:7.50px;line-height:7.50px;color:#262626;transform:scaleX(0.945);transform-origin:center top;">3,281</span>
<span class="t" style="left:506.62px;top:399.02px;font-size:7.50px;line-height:7.50px;color:#262626;transform:scaleX(0.945);transform-origin:center top;">3,281</span>
<div class="a" style="left:50px;top:420px;width:511px;height:1px;background:#e8e8e8;"></div>
<span class="t" style="left:52.00px;top:412.02px;font-size:7.50px;line-height:7.50px;color:#262626;transform:scaleX(0.900);transform-origin:left top;">CUMARU</span>
<span class="t" style="left:328.74px;top:412.02px;font-size:7.50px;line-height:7.50px;color:#262626;transform:scaleX(0.945);transform-origin:center top;">278</span>
<span class="t" style="left:411.94px;top:412.02px;font-size:7.50px;line-height:7.50px;color:#262626;transform:scaleX(0.945);transform-origin:center top;">463,863</span>
<span class="t" style="left:502.44px;top:412.02px;font-size:7.50px;line-height:7.50px;color:#262626;transform:scaleX(0.945);transform-origin:center top;">291,563</span>
<div class="a" style="left:50px;top:433px;width:511px;height:1px;background:#e8e8e8;"></div>
<span class="t" style="left:52.00px;top:425.02px;font-size:7.50px;line-height:7.50px;color:#262626;transform:scaleX(0.900);transform-origin:left top;">GARROTE</span>
<span class="t" style="left:332.91px;top:425.02px;font-size:7.50px;line-height:7.50px;color:#262626;transform:scaleX(0.945);transform-origin:center top;">2</span>
<span class="t" style="left:416.39px;top:425.02px;font-size:7.50px;line-height:7.50px;color:#262626;transform:scaleX(0.945);transform-origin:center top;">3,911</span>
<span class="t" style="left:506.62px;top:425.02px;font-size:7.50px;line-height:7.50px;color:#262626;transform:scaleX(0.945);transform-origin:center top;">2,275</span>
<div class="a" style="left:50px;top:446px;width:511px;height:1px;background:#e8e8e8;"></div>
<span class="t" style="left:52.00px;top:438.02px;font-size:7.50px;line-height:7.50px;color:#262626;transform:scaleX(0.900);transform-origin:left top;">GUARITÁ</span>
<span class="t" style="left:332.91px;top:438.02px;font-size:7.50px;line-height:7.50px;color:#262626;transform:scaleX(0.945);transform-origin:center top;">2</span>
<span class="t" style="left:416.12px;top:438.02px;font-size:7.50px;line-height:7.50px;color:#262626;transform:scaleX(0.945);transform-origin:center top;">2,048</span>
<span class="t" style="left:506.62px;top:438.02px;font-size:7.50px;line-height:7.50px;color:#262626;transform:scaleX(0.945);transform-origin:center top;">0,692</span>
<div class="a" style="left:50px;top:460px;width:511px;height:1px;background:#e8e8e8;"></div>
<span class="t" style="left:52.00px;top:452.02px;font-size:7.50px;line-height:7.50px;color:#262626;transform:scaleX(0.900);transform-origin:left top;">IPÊ</span>
<span class="t" style="left:331.11px;top:452.02px;font-size:7.50px;line-height:7.50px;color:#262626;transform:scaleX(0.945);transform-origin:center top;">11</span>
<span class="t" style="left:414.03px;top:452.02px;font-size:7.50px;line-height:7.50px;color:#262626;transform:scaleX(0.945);transform-origin:center top;">26,320</span>
<span class="t" style="left:504.53px;top:452.02px;font-size:7.50px;line-height:7.50px;color:#262626;transform:scaleX(0.945);transform-origin:center top;">14,871</span>
<div class="a" style="left:50px;top:516px;width:511px;height:1px;background:#a0a0a0;"></div>
<div class="a" style="left:50px;top:517px;width:511px;height:15px;background:#efefef;"></div>
<div class="a" style="left:289px;top:517px;width:91px;height:15px;background:#e3e7e9;box-shadow:inset 0 0 0 1px #d0d4d6;"></div>
<div class="a" style="left:381px;top:517px;width:89px;height:15px;background:#e3e7e9;box-shadow:inset 0 0 0 1px #d0d4d6;"></div>
<div class="a" style="left:471px;top:517px;width:90px;height:15px;background:#e3e7e9;box-shadow:inset 0 0 0 1px #d0d4d6;"></div>
<span class="t" style="left:328.74px;top:521.12px;font-size:7.50px;line-height:7.50px;color:#262626;transform:scaleX(0.945);transform-origin:center top;">301</span>
<span class="t" style="left:411.94px;top:521.12px;font-size:7.50px;line-height:7.50px;color:#262626;transform:scaleX(0.945);transform-origin:center top;">509,258</span>
<span class="t" style="left:502.44px;top:521.12px;font-size:7.50px;line-height:7.50px;color:#262626;transform:scaleX(0.945);transform-origin:center top;">322,079</span>
</body></html>
